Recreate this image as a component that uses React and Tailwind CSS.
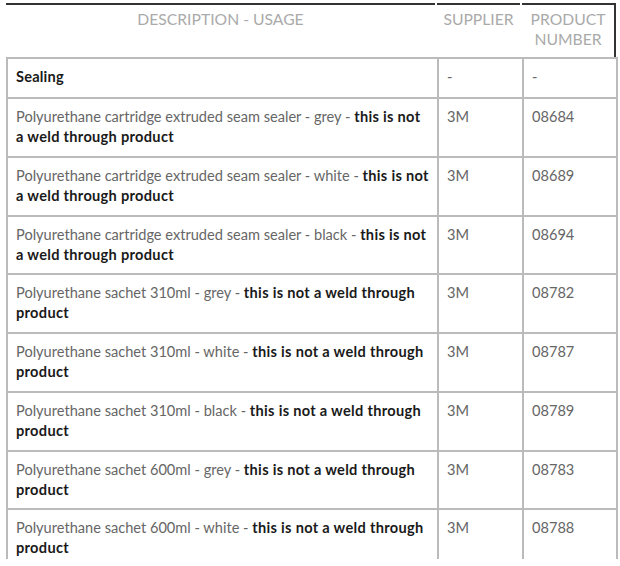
import React from "react";

const rows = [
  ["Polyurethane cartridge extruded seam sealer - grey - ", "this is not a weld through product", "3M", "08684"],
  ["Polyurethane cartridge extruded seam sealer - white - ", "this is not a weld through product", "3M", "08689"],
  ["Polyurethane cartridge extruded seam sealer - black - ", "this is not a weld through product", "3M", "08694"],
  ["Polyurethane sachet 310ml - grey - ", "this is not a weld through product", "3M", "08782"],
  ["Polyurethane sachet 310ml - white - ", "this is not a weld through product", "3M", "08787"],
  ["Polyurethane sachet 310ml - black - ", "this is not a weld through product", "3M", "08789"],
  ["Polyurethane sachet 600ml - grey - ", "this is not a weld through product", "3M", "08783"],
  ["Polyurethane sachet 600ml - white - ", "this is not a weld through product", "3M", "08788"],
];

const cell = "border-2 border-[#bbbbbb] px-[8px] pt-[8px] pb-[8.75px] align-top text-[#666666]";

export default function App() {
  return (
    <div className="w-[620px] h-[566px] bg-white">
      <div
        className="h-[559px] overflow-hidden pt-[3px] pl-[6px]"
        style={{ fontFamily: "Lato, 'Noto Sans', sans-serif" }}
      >
        <div className="grid grid-cols-[431px_85px_94px] w-[610px] text-[15.7px] leading-[20px] text-[#aaaaaa] uppercase h-[54px]">
          <div className="border-t-2 border-[#333333] mr-[2px] pt-[4px] text-center">Description - Usage</div>
          <div className="border-t-2 border-[#333333] mr-[2px] pt-[4px] text-center">Supplier</div>
          <div className="border-t-2 border-r-2 border-[#333333] pt-[4px] text-center">Product Number</div>
        </div>
        <table className="table-fixed border-collapse w-[610px] text-[14.6px] leading-[20px]">
          <colgroup>
            <col className="w-[431px]" />
            <col className="w-[85px]" />
            <col className="w-[94px]" />
          </colgroup>
          <tbody>
            <tr>
              <td className="border-2 border-[#bbbbbb] px-[8px] pt-[8px] pb-[10px] align-top font-bold text-[#1a1a1a] tracking-[0.2px]">Sealing</td>
              <td className="border-2 border-[#bbbbbb] px-[8px] pt-[8px] pb-[10px] align-top text-[#666666]">-</td>
              <td className="border-2 border-[#bbbbbb] px-[8px] pt-[8px] pb-[10px] align-top text-[#666666]">-</td>
            </tr>
            {rows.map((r, i) => (
              <tr key={i}>
                <td className={cell}>
                  {r[0]}
                  <span className="font-bold text-[#1a1a1a] tracking-[0.3px]">{r[1]}</span>
                </td>
                <td className={cell}>{r[2]}</td>
                <td className={cell}>{r[3]}</td>
              </tr>
            ))}
          </tbody>
        </table>
      </div>
    </div>
  );
}
